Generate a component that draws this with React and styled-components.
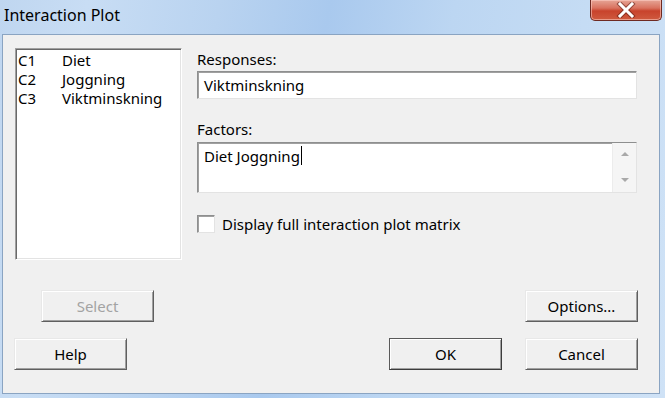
import React from "react";
import styled, { createGlobalStyle } from "styled-components";

const GlobalStyle = createGlobalStyle`
  html, body {
    margin: 0;
    padding: 0;
    width: 665px;
    height: 398px;
    overflow: hidden;
    background: #c9dcf1;
  }
  * {
    box-sizing: border-box;
  }
`;

const Window = styled.div`
  width: 665px;
  height: 398px;
  display: flex;
  flex-direction: column;
  padding: 0 5px 4px 2px;
  background: linear-gradient(
    100deg,
    #bfd6f0 0%,
    #c8ddf4 12%,
    #b9d3f0 30%,
    #a9c9ee 45%,
    #bcd6f2 62%,
    #c5dcf4 80%,
    #cfe2f6 100%
  );
  font-family: "Noto Sans", "Open Sans", sans-serif;
  color: #000;
`;

const TitleBar = styled.div`
  height: 34px;
  flex: none;
  display: flex;
  align-items: flex-start;
  justify-content: space-between;
  padding-left: 2px;
`;

const Title = styled.span`
  font-size: 16px;
  line-height: 18px;
  margin-top: 6px;
  color: #000;
`;

const CloseButton = styled.div`
  width: 72px;
  height: 21px;
  margin-right: -2px;
  border: 1px solid #6e2a22;
  border-top: none;
  border-radius: 0 0 5px 5px;
  background: linear-gradient(
    180deg,
    #e6a596 0%,
    #d9725f 40%,
    #c8432c 55%,
    #cf5a3f 100%
  );
  box-shadow: inset 0 0 0 1px rgba(255, 210, 200, 0.55);
  display: flex;
  align-items: center;
  justify-content: center;
`;

const Client = styled.div`
  flex: 1;
  background: #f0f0f0;
  border: 1px solid #8aa4c2;
  display: flex;
  flex-direction: column;
`;

const TopSection = styled.div`
  display: grid;
  grid-template-columns: 167px 440px;
  column-gap: 15px;
  padding: 13px 0 0 12px;
`;

const ListBox = styled.div`
  height: 212px;
  background: #fff;
  border: 1px solid;
  border-color: #a0a0a0 #ffffff #ffffff #a0a0a0;
  box-shadow: inset 1px 1px 0 #696969, inset -1px -1px 0 #e3e3e3;
  padding: 2px 0 0 2px;
`;

const ListRow = styled.div`
  display: grid;
  grid-template-columns: 44px 1fr;
  font-size: 15px;
  line-height: 19px;
  white-space: nowrap;
`;

const FieldColumn = styled.div`
  display: flex;
  flex-direction: column;
`;

const Label = styled.div`
  font-size: 15px;
  line-height: 18px;
  margin-top: ${(p) => p.$top}px;
`;

const Sunken = styled.div`
  background: #fff;
  border: 1px solid;
  border-color: #8e8f8f #e3e3e3 #e3e3e3 #8e8f8f;
  box-shadow: inset 1px 1px 0 #a0a0a0;
`;

const TextBox = styled(Sunken)`
  margin-top: 3px;
  height: 28px;
  padding: 0 6px;
  display: flex;
  align-items: center;
  font-size: 15px;
`;

const MultiBox = styled(Sunken)`
  margin-top: 4px;
  height: 51px;
  display: flex;
`;

const MultiText = styled.div`
  flex: 1;
  padding: 3px 6px;
  font-size: 15px;
  line-height: 20px;
  display: flex;
  align-items: flex-start;
`;

const Caret = styled.span`
  display: inline-block;
  width: 1px;
  height: 19px;
  background: #000;
  margin-left: 1px;
`;

const ScrollBar = styled.div`
  width: 24px;
  background: #f5f5f5;
  border-left: 1px solid #ececec;
  display: flex;
  flex-direction: column;
  align-items: center;
  justify-content: space-between;
  padding: 9px 0 10px;
`;

const Arrow = styled.div`
  width: 0;
  height: 0;
  border-left: 4px solid transparent;
  border-right: 4px solid transparent;
  ${(p) =>
    p.$up
      ? "border-bottom: 4px solid #a9a9a9;"
      : "border-top: 4px solid #a9a9a9;"}
`;

const CheckRow = styled.div`
  margin-top: 21px;
  display: flex;
  align-items: center;
  gap: 7px;
  font-size: 15px;
`;

const CheckBox = styled(Sunken)`
  width: 18px;
  height: 18px;
  flex: none;
`;

const ButtonRow = styled.div`
  display: flex;
  justify-content: space-between;
  align-items: center;
  margin-top: ${(p) => p.$top}px;
  padding: 0 21px 0 ${(p) => p.$left}px;
`;

const RightGroup = styled.div`
  display: flex;
  gap: 23px;
`;

const Button = styled.div`
  width: 113px;
  height: 32px;
  display: flex;
  align-items: center;
  justify-content: center;
  font-size: 15px;
  color: ${(p) => (p.$disabled ? "#a3a3a3" : "#000")};
  background: #f0f0f0;
  border: 1px solid;
  border-color: ${(p) =>
    p.$default ? "#5a5a5a #3c3c3c #3c3c3c #5a5a5a" : "#e8e8e8 #5f5f5f #5f5f5f #e8e8e8"};
  box-shadow: ${(p) =>
    p.$default
      ? "inset 1px 1px 0 #ffffff, inset -1px -1px 0 #a0a0a0"
      : "inset 1px 1px 0 #ffffff, inset -1px -1px 0 #a0a0a0"};
`;

const columns = [
  ["C1", "Diet"],
  ["C2", "Joggning"],
  ["C3", "Viktminskning"],
];

export default function App() {
  return (
    <>
      <GlobalStyle />
      <Window>
        <TitleBar>
          <Title>Interaction Plot</Title>
          <CloseButton>
            <svg width="20" height="16" viewBox="0 0 20 16">
              <path
                d="M4 2 L16 14 M16 2 L4 14"
                stroke="#5a1a12"
                strokeWidth="5"
                strokeLinecap="square"
                opacity="0.55"
              />
              <path
                d="M4 2 L16 14 M16 2 L4 14"
                stroke="#ffffff"
                strokeWidth="3"
                strokeLinecap="square"
              />
            </svg>
          </CloseButton>
        </TitleBar>
        <Client>
          <TopSection>
            <ListBox>
              {columns.map(([id, name]) => (
                <ListRow key={id}>
                  <span>{id}</span>
                  <span>{name}</span>
                </ListRow>
              ))}
            </ListBox>
            <FieldColumn>
              <Label $top={2}>Responses:</Label>
              <TextBox>Viktminskning</TextBox>
              <Label $top={21}>Factors:</Label>
              <MultiBox>
                <MultiText>
                  Diet Joggning
                  <Caret />
                </MultiText>
                <ScrollBar>
                  <Arrow $up />
                  <Arrow />
                </ScrollBar>
              </MultiBox>
              <CheckRow>
                <CheckBox />
                <span>Display full interaction plot matrix</span>
              </CheckRow>
            </FieldColumn>
          </TopSection>
          <ButtonRow $top={30} $left={38}>
            <Button $disabled>Select</Button>
            <Button>Options...</Button>
          </ButtonRow>
          <ButtonRow $top={16} $left={11}>
            <Button>Help</Button>
            <RightGroup>
              <Button $default>OK</Button>
              <Button>Cancel</Button>
            </RightGroup>
          </ButtonRow>
        </Client>
      </Window>
    </>
  );
}
